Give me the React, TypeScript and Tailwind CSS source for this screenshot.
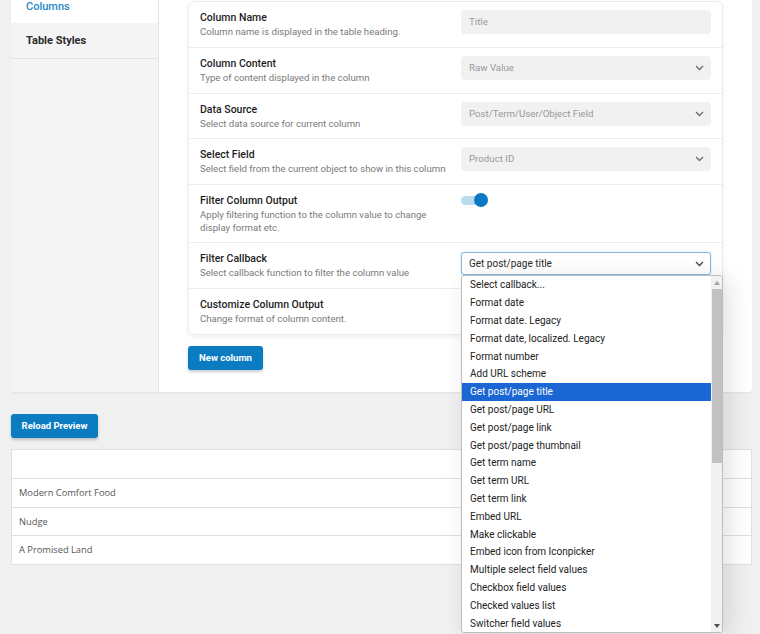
import React from "react";

const rows = [
  { title: "Column Name", desc: "Column name is displayed in the table heading.", kind: "input", value: "Title", h: "h-[46px]" },
  { title: "Column Content", desc: "Type of content displayed in the column", kind: "select", value: "Raw Value", h: "h-[46px]" },
  { title: "Data Source", desc: "Select data source for current column", kind: "select", value: "Post/Term/User/Object Field", h: "h-[45px]" },
  { title: "Select Field", desc: "Select field from the current object to show in this column", kind: "select", value: "Product ID", h: "h-[46px]" },
  { title: "Filter Column Output", desc: "Apply filtering function to the column value to change display format etc.", kind: "toggle", value: "", h: "h-[58px]" },
  { title: "Filter Callback", desc: "Select callback function to filter the column value", kind: "active", value: "Get post/page title", h: "h-[46px]" },
  { title: "Customize Column Output", desc: "Change format of column content.", kind: "none", value: "", h: "h-[45px]" },
];

const callbacks = [
  "Select callback...",
  "Format date",
  "Format date. Legacy",
  "Format date, localized. Legacy",
  "Format number",
  "Add URL scheme",
  "Get post/page title",
  "Get post/page URL",
  "Get post/page link",
  "Get post/page thumbnail",
  "Get term name",
  "Get term URL",
  "Get term link",
  "Embed URL",
  "Make clickable",
  "Embed icon from Iconpicker",
  "Multiple select field values",
  "Checkbox field values",
  "Checked values list",
  "Switcher field values",
];

function Chevron({ color = "#6b6b6b" }: { color?: string }) {
  return (
    <svg width="9" height="6" viewBox="0 0 9 6" fill="none">
      <path d="M1 1l3.5 3.5L8 1" stroke={color} strokeWidth="1.3" />
    </svg>
  );
}

function Control({ kind, value }: { kind: string; value: string }) {
  if (kind === "input") {
    return (
      <div className="h-[24px] rounded-[4px] bg-[#f1f1f1] flex items-center px-[8px] text-[9.7px] text-[#9a9a9a] -mt-[1px]">
        {value}
      </div>
    );
  }
  if (kind === "select") {
    return (
      <div className="h-[24px] rounded-[4px] bg-[#f1f1f1] flex items-center justify-between pl-[8px] pr-[7px] text-[9.7px] text-[#9a9a9a] -mt-[1px]">
        <span>{value}</span>
        <Chevron />
      </div>
    );
  }
  if (kind === "toggle") {
    return (
      <div className="relative w-[27px] h-[14px] -mt-[1px]">
        <div className="absolute left-0 top-[2.5px] w-[26px] h-[9px] rounded-full bg-[#b9dbee]" />
        <div className="absolute right-0 top-0 w-[14px] h-[14px] rounded-full bg-[#0a78c2]" />
      </div>
    );
  }
  if (kind === "active") {
    return (
      <div className="h-[23px] rounded-[3px] bg-white border border-[#7fbbe0] flex items-center justify-between pl-[7px] pr-[6px] text-[10px] text-[#2b2b2b] shadow-[0_0_2px_rgba(10,120,194,0.25)]">
        <span>{value}</span>
        <Chevron color="#444" />
      </div>
    );
  }
  return null;
}

export default function App() {
  return (
    <div className="relative h-[634px] overflow-hidden bg-[#f0f0f1]" style={{ fontFamily: "Roboto, 'Liberation Sans', sans-serif" }}>
      {/* settings panel */}
      <div className="ml-[11px] w-[741px] -mt-[16px] flex bg-white rounded-b-[3px] shadow-[0_1px_2px_rgba(0,0,0,0.06)]">
        <div className="w-[148px] shrink-0 bg-[#f4f4f4] border-r border-[#e4e4e4]">
          <div className="h-[39px] bg-white flex items-center pt-[7px] px-[15px] text-[11px] font-medium text-[#1f88c9]">
            Columns
          </div>
          <div className="h-[36px] border-b border-[#e2e2e2] flex items-center pt-[2px] px-[15px] text-[11px] font-bold text-[#2a2a2a]">
            Table Styles
          </div>
        </div>
        <div className="flex-1 pl-[29px] pr-[29px] pt-[17px] pb-[22px]">
          <div className="border border-[#ececec] rounded-[6px] shadow-[0_2px_5px_rgba(0,0,0,0.06)] bg-white">
            {rows.map((r, i) => (
              <div
                key={r.title}
                className={
                  "grid grid-cols-[261px_1fr] items-start px-[11px] pt-[9px] " +
                  r.h +
                  (i < rows.length - 1 ? " border-b border-[#ededed]" : "")
                }
              >
                <div className="w-[255px]">
                  <div className="text-[10.5px] leading-[14px] font-medium text-[#1d1d1d]">{r.title}</div>
                  <div className="text-[9.6px] leading-[13px] text-[#7a7a7a]">{r.desc}</div>
                </div>
                <Control kind={r.kind} value={r.value} />
              </div>
            ))}
          </div>
          <button className="mt-[11px] h-[24px] w-[75px] rounded-[3px] bg-[#0b7cc1] text-white text-[9.5px] font-bold shadow-[0_2px_3px_rgba(0,0,0,0.2)]">
            New column
          </button>
        </div>
      </div>

      <button className="ml-[11px] mt-[22px] h-[24px] w-[87px] rounded-[3px] bg-[#0b7cc1] text-white text-[9.5px] font-bold shadow-[0_2px_3px_rgba(0,0,0,0.2)]">
        Reload Preview
      </button>

      {/* preview table */}
      <div className="ml-[11px] mt-[11px] w-[741px] bg-white border border-[#e0e0e0] text-[9.3px] text-[#555]" style={{ fontFamily: "'Open Sans', 'Liberation Sans', sans-serif" }}>
        <div className="h-[29px] border-b border-[#e0e0e0]" />
        <div className="h-[29px] border-b border-[#e0e0e0] flex items-center px-[7px]">Modern Comfort Food</div>
        <div className="h-[28px] border-b border-[#e0e0e0] flex items-center px-[7px]">Nudge</div>
        <div className="h-[28px] flex items-center px-[7px]">A Promised Land</div>
      </div>

      {/* open dropdown list */}
      <div className="absolute left-[461px] top-[275px] w-[262px] h-[358px] bg-white border border-[#bdbdbd] rounded-[3px] flex shadow-[6px_4px_24px_rgba(0,0,0,0.12)] overflow-hidden">
        <div className="flex-1">
          {callbacks.map((c) => (
            <div
              key={c}
              className={
                "h-[17.8px] flex items-center pl-[8px] text-[10px] " +
                (c === "Get post/page title" ? "bg-[#1a66d2] text-white" : "text-[#222]")
              }
            >
              {c}
            </div>
          ))}
        </div>
        <div className="w-[11px] bg-[#f1f1f1] flex flex-col items-center">
          <div className="h-[13px] flex items-center justify-center">
            <svg width="6" height="4" viewBox="0 0 6 4"><path d="M0 4L3 0l3 4z" fill="#a3a3a3" /></svg>
          </div>
          <div className="w-[10px] h-[174px] bg-[#c1c1c1]" />
          <div className="flex-1" />
          <div className="h-[13px] flex items-center justify-center">
            <svg width="6" height="4" viewBox="0 0 6 4"><path d="M0 0h6L3 4z" fill="#505050" /></svg>
          </div>
        </div>
      </div>
    </div>
  );
}
